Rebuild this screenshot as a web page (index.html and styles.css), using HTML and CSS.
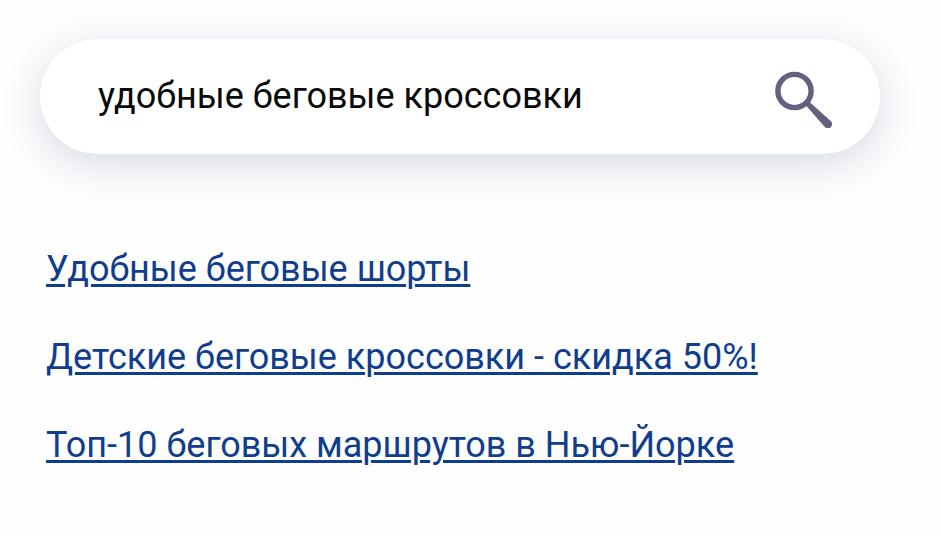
FILE: index.html
```html
<!DOCTYPE html>
<html lang="ru">
<head>
  <meta charset="UTF-8">
  <meta name="viewport" content="width=device-width, initial-scale=1">
  <title>Поиск</title>
  <link rel="stylesheet" href="styles.css">
</head>
<body>
  <form class="search-box" role="search">
    <input class="search-input" type="text" name="q" value="удобные беговые кроссовки" aria-label="Поиск">
    <button class="search-btn" type="submit" aria-label="Найти">
      <svg class="search-icon" viewBox="0 0 60 64" aria-hidden="true">
        <circle cx="20.5" cy="27" r="16.6" fill="none" stroke="#62617e" stroke-width="5.4"/>
        <path d="M31.5 41L35 37.5L57 57.3A4.2 4.2 0 0 1 50.8 63Z" fill="#62617e"/>
      </svg>
    </button>
  </form>

  <ul class="results">
    <li><a href="#">Удобные беговые шорты</a></li>
    <li><a href="#">Детские беговые кроссовки - скидка 50%!</a></li>
    <li><a href="#">Топ-10 беговых маршрутов в Нью-Йорке</a></li>
  </ul>
</body>
</html>
```

FILE: styles.css
```css
body {
  font-family: Roboto, sans-serif;
  background-color: #fefefe;
  margin: 0;
  padding: 39px 60px 40px 40px;
}
.search-box {
  display: flex;
  align-items: center;
  padding: 25px 46px 26px 58px;
  border-radius: 58px;
  background-color: #fff;
  box-shadow: 0 10px 40px rgba(55, 70, 130, 0.2);
}
.search-input {
  flex: 1;
  min-width: 0;
  padding: 0;
  border: none;
  outline: none;
  background: none;
  font-family: inherit;
  font-size: 36px;
  color: #0a0a0a;
}
.search-btn {
  padding: 0;
  border: none;
  background: none;
  cursor: pointer;
}
.search-icon {
  display: block;
  width: 60px;
  height: 64px;
}
.results {
  list-style: none;
  margin: 91px 0 0;
  padding: 0 6px;
}
.results li {
  margin-bottom: 40px;
  font-size: 36px;
  line-height: 48px;
}
.results a {
  color: #103d8c;
  text-decoration-thickness: 3px;
  text-underline-offset: 3px;
}
```
